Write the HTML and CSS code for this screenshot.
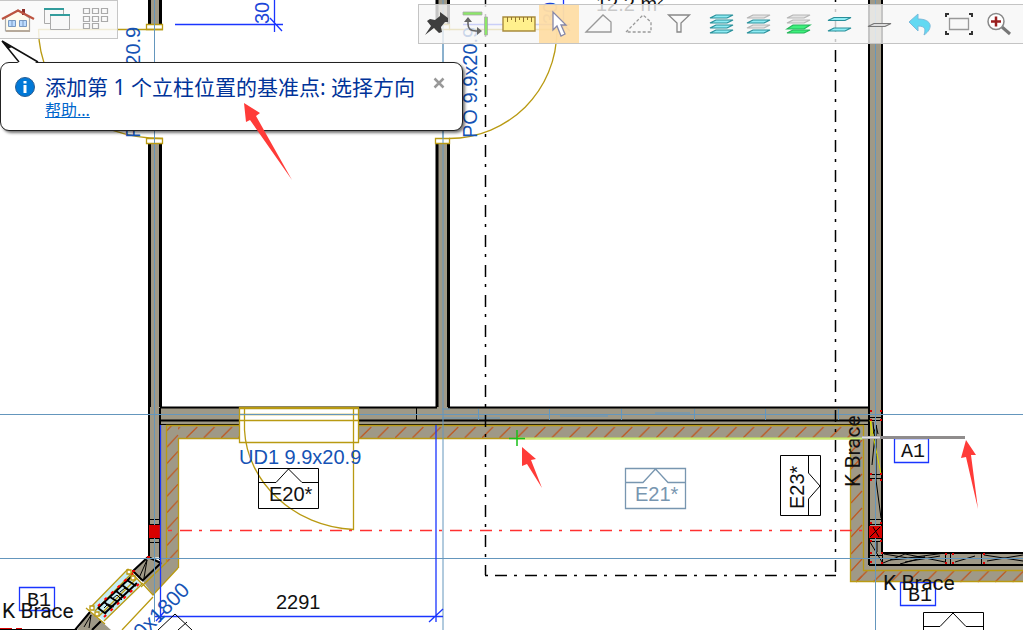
FILE: index.html
```html
<!DOCTYPE html>
<html lang="zh-CN">
<head>
<meta charset="utf-8">
<title>平面图</title>
<link rel="stylesheet" href="styles.css">
</head>
<body>
<main class="stage">
<svg class="plan" role="img" aria-label="平面图">
  <defs>
    <pattern id="hatch-h" patternUnits="userSpaceOnUse" x="395" y="425" width="17.4" height="14"><path class="hatch" d="M0 13L11 2"/></pattern>
    <pattern id="hatch-v" patternUnits="userSpaceOnUse" x="167" y="432" width="12" height="16.4"><path class="hatch" d="M0 15L11 3"/></pattern>
    <pattern id="hatch-r" patternUnits="userSpaceOnUse" x="851" y="437" width="12" height="17"><path class="hatch" d="M0 15L11 3"/></pattern>
    <pattern id="hatch-b" patternUnits="userSpaceOnUse" x="856" y="570" width="17.4" height="13"><path class="hatch" d="M0 12L11 1"/></pattern>
  </defs>

  <!-- walls -->
  <g class="fill-wall">
    <path d="M148 0H162V24H148zM148 143H162V557L148 558zM436 0H450V24H436zM436 143H450V408H436zM869 0H883V565H869z"/>
    <path d="M160 407H870V438H178V568L153 595L142 580L161 562z"/>
    <path d="M850 425H869V553H1023V582H850z"/>
    <path d="M148 557L161 563L142 580L133 571z"/>
    <path d="M90 612L101 621L111 630H77z"/>
  </g>
  <path fill="url(#hatch-h)" d="M178 425H866V439H178z"/>
  <path fill="url(#hatch-v)" d="M167 426H179V562H167z"/>
  <path fill="url(#hatch-r)" d="M851 439H863V580H851z"/>
  <path fill="url(#hatch-b)" d="M856 570H1023V583H856z"/>
  <g class="black thick3">
    <path d="M149.500 0V24M160.500 0V24M149.500 143V407M160.500 143V407M437 0V24M448.500 0V24M437 143V407M448.500 143V407"/>
  </g>
  <g class="black thick2">
    <path d="M149 400V557M160 408V425M160 407.500H437M448 407.500H870M160 420.500H870M869 0V565M882 0V553M882 553H1023M869 565H1023"/>
    <path d="M148 557L133 571M161 563L142 581M148 557L161 563M133 571L142 580M90 612L75 630M101 621L92 630M0 630H77"/>
  </g>
  <g class="black">
    <path d="M149 519.500H160M149 524.500H160M149 538.500H160M149 542.500H160M159.500 425V560M416.500 408V420M139 578L147 560L144 578M84 627L91 615L89 628"/>
    <path d="M870 417.500H882M870 420.500H882M870 474.500H882M870 478.500H882M870 519.500H882M870 524.500H882M870 538.500H882M870 541.500H882M870 555.500H882M872 465L876 425L878 434M873 434L876 427M876 425V480L881 518M873 422L876 455M870 542L882 562M877 542V552M882.500 553V565"/>
    <path d="M883 563L905 554L945 562M884 554L908 558L945 553M890 560L925 557L900 564M905 562L940 556M945.500 553V565M950.500 553V565M981.500 553V565M955 562L975 556M984 555L1023 561M987 561L1023 555M160 424.500H869"/>
  </g>
  <path class="yellow-bright" d="M870 420L881 474M871 420V436"/>

  <!-- insulation outline -->
  <path class="gold" d="M166.500 563V425.500H863.500V570.500H1023M178.500 568V438.500H850.500V581.500H1023M178 568L153 595L142 583M167 562L141 587M153 597L122 630"/>

  <!-- guides -->
  <path class="guide" d="M0 414.500H1023M0 558.500H1023M154.500 0V622M443 0V630M875.500 0V630"/>
  <path class="guide" d="M478.500 409V420M549.500 409V420M621.500 409V420M694.500 409V420M765.500 409V420M838.500 409V420M442 409H450M442 418H500M560 416H608M655 413H690"/>

  <!-- door openings -->
  <g class="gold on-white">
    <path d="M146.500 24.500H162.500V29.500H146.500zM146.500 138.500H162.500V143.500H146.500zM435.500 24.500H449.500V29.500H435.500zM435.500 138.500H449.500V143.500H435.500z"/>
    <path d="M239.500 407.500H358.500V442.500H239.500z"/>
  </g>
  <g class="gold">
    <path d="M38.500 29.500H163M38.500 29C39 92 90 138 163 138.500M449 29.500H557M557 29C557 92 508 138 449 138.500"/>
    <path d="M240 408.500H358M240 414.500H358M240 420.500H358M244.500 408V430C247 482 294 527 353.500 529.500V408"/>
  </g>
  <path class="guide" d="M154.500 24V143M443 24V143M240 414.500H358"/>

  <!-- corner window -->
  <g>
    <path class="glass" d="M128 570L142 585L104 621L90 608z"/>
    <path class="gold" d="M128 569L142 584M90 608L128 569M104 621L142 584M86 608L105 624M133 572L95 611M137 578L99 616"/>
    <path class="black thick2" d="M98 608L132 576M105 613L137 583"/>
    <path class="black thick2" d="M98 608L106 614M104 602L112 608M110 597L118 602M116 591L124 597M122 585L130 591M127 580L136 586"/>
    <path class="black" d="M104 608L108 604L114 607M112 599L117 595L122 600M120 592L125 588L130 592"/>
    <path class="red-dots" d="M98 606L134 572M104 617L142 581"/>
    <path class="on-white gold" d="M90 606h4v4h-4zM127 570h4v4h-4zM131 576h4v4h-4zM95 612h4v4h-4z"/>
  </g>

  <!-- posts -->
  <g class="red-fill">
    <path d="M149 525H160V538H149zM869 526H882V538H869z"/>
    <path d="M870 410h2v2h-2zM880 410h2v2h-2zM870 419h2v2h-2zM880 419h2v2h-2zM870 473h2v2h-2zM880 473h2v2h-2zM870 479h2v2h-2zM880 479h2v2h-2zM870 522h2v2h-2zM880 522h2v2h-2zM870 540h2v2h-2zM880 540h2v2h-2zM870 552h2v2h-2zM870 561h2v2h-2zM881 552h2v2h-2zM881 562h2v2h-2zM945 553h2v2h-2zM945 562h2v2h-2zM952 553h2v2h-2zM952 562h2v2h-2zM983 553h2v2h-2zM983 562h2v2h-2zM147 556h3v2h-3zM132 570h3v2h-3zM0 628h12v1h-12zM16 628h6v1h-6z"/>
  </g>
  <path class="black" d="M870 537L880 527M873 527L879 537"/>

  <!-- dash-dot lines -->
  <path class="black thick2 dash" d="M485.500 -5V575"/>
  <path class="black thick2 dash" d="M835.500 -10V575"/>
  <path class="black thick2 dash" d="M495 575.500H836M485 575.500h3"/>
  <path class="axis dash" d="M180 530.500H869M168 530.500h4"/>

  <!-- dimensions -->
  <path class="blue" d="M160.500 425V622M436 425V622M155 616.500H443M429 622L443 609M156 621L164 612M175 24.500H283M274.500 0V32M270 18L282 31M463 24.500H570M563.500 0V31M557 18L570 31"/>
  <path class="blue" d="M894.500 438.500H928.500V462.500H894.500zM900.500 582.500H935.500V605.500H900.500zM19.500 587.500H54.500V610.500H19.500z"/>

  <!-- elevation markers -->
  <path class="black" d="M258.500 468.500H318.500V508.500H258.500zM258 482.500H276L288.500 469L302 482.500H318M780.500 455.500H820.500V515.500H780.500zM808.500 456V473L820 486L808.500 499V515M923.500 640V612.500H983.500V640M923 626.500H940L953 613L966 626.500H983M158 630L175 614L192 630M187 622L178 630"/>
  <path class="marker-blue" d="M625.500 468.500H685.500V508.500H625.500zM625 482.500H643L655.500 469L668 482.500H685"/>

  <!-- labels -->
  <text class="label" x="269" y="501">E20*</text>
  <text class="label muted" x="635" y="501">E21*</text>
  <text class="label" transform="translate(804 509) rotate(-90)">E23*</text>
  <text class="label" x="276" y="609">2291</text>
  <text class="label door" x="239" y="464">UD1 9.9x20.9</text>
  <text class="label door" transform="translate(477 138) rotate(-90)">PO 9.9x20.9</text>
  <text class="label door" transform="translate(140 138) rotate(-90)">PO 9.9x20.9</text>
  <text class="label door slanted" transform="translate(142 640) rotate(-45)">0x1800</text>
  <text class="label dim" transform="translate(269 24) rotate(-90)">30</text>
  <text class="label dim" transform="translate(557 24) rotate(-90)">30</text>
  <text class="label" x="596" y="11">12.2 m²</text>
  <text class="label brace" x="2" y="618">K Brace</text>
  <text class="label brace" x="883" y="590">K Brace</text>
  <text class="label brace" transform="translate(860 487) rotate(-90)">K Brace</text>
  <text class="label grid-name" x="901" y="457">A1</text>
  <text class="label grid-name" x="908" y="601">B1</text>
  <text class="label grid-name" x="27" y="606">B1</text>

  <!-- direction picking -->
  <path class="pick" d="M517 438.500H862"/>
  <path class="ray" d="M862 437.500H965"/>
  <path class="ray-light" d="M862 437.500H880"/>
  <path class="cross" d="M509 438.500H525M517 430V446"/>
</svg>

<nav class="views" aria-label="视图">
  <button class="view" type="button" aria-label="主页"><svg width="36" height="28" viewBox="0 0 36 28"><path fill="#fffbed" stroke="#aaa" stroke-width="1.200" d="M5.500 13L18 5L29.500 13V26H5.500z"/><path fill="#b6a99b" d="M6 25h24v2H6z"/><path fill="#8d2f2a" d="M22 4h3v6h-3z"/><path fill="none" stroke="#bd5440" stroke-width="2.200" d="M2 14L18 5.500L34 14"/><path fill="#bcdcff" stroke="#7899c1" d="M8.500 15.500h7v6h-7zM19.500 15.500h7v6h-7zM12 15.500v6M23 15.500v6"/></svg></button>
  <button class="view" type="button" aria-label="窗口"><svg width="36" height="28" viewBox="0 0 36 28"><path fill="#f8f8f8" stroke="#aaa" d="M5.500 4.500h19v14h-19z"/><path stroke="#329c9c" stroke-width="2" d="M5 4h20"/><path fill="#f8f8f8" stroke="#aaa" d="M11.500 10.500h19v14h-19z"/><path stroke="#329c9c" stroke-width="2" d="M11 10h20"/></svg></button>
  <button class="view" type="button" aria-label="网格"><svg width="36" height="28" viewBox="0 0 36 28"><path fill="none" stroke="#aaa" stroke-width="1.200" d="M5.500 3.500h6v5h-6zM14.500 3.500h6v5h-6zM23.500 3.500h6v5h-6zM5.500 11.500h6v5h-6zM14.500 11.500h6v5h-6zM23.500 11.500h6v5h-6zM5.500 18.500h6v5h-6zM14.500 18.500h6v5h-6z"/></svg></button>
</nav>

<div class="tools" role="toolbar" aria-label="工具">
  <button class="tool" type="button" aria-label="固定"><svg class="icon" viewBox="0 0 40 38"><path fill="#3e3e3e" d="M21 7L29 13L29 17L26 17L22 22L23 27L20 28L15 23L6 30L12 21L8 16L11 14L16 15L21 11z"/></svg></button>
  <button class="tool" type="button" aria-label="旋转对齐"><svg class="icon" viewBox="0 0 40 38"><path fill="#8be868" stroke="#aaa" stroke-width=".8" d="M4 7h19v3H4zM25.500 12h3v18h-3z"/><path fill="none" stroke="#666" stroke-width="1.600" d="M9 15V19Q9 26 17 26H21"/><path fill="#666" d="M9 12L13 17H5zM23 26L18 22V30z"/></svg></button>
  <button class="tool" type="button" aria-label="测量"><svg class="icon" viewBox="0 0 40 38"><path fill="#fff08d" stroke="#a88a3c" stroke-width="1.400" d="M4 12h32v14H4z"/><path stroke="#927530" d="M8.500 12v5M12.500 12v3M16.500 12v5M20.500 12v3M24.500 12v5M28.500 12v3M32.500 12v5"/></svg></button>
  <button class="tool tool-active" type="button" aria-label="选择" aria-pressed="true"><svg class="icon" viewBox="0 0 40 38"><path fill="#fff" stroke="#8587a8" stroke-width="1.300" d="M14 7V25L18 21L22 31L26 29L22 20L27 20z"/></svg></button>
  <button class="tool" type="button" aria-label="多边形"><svg class="icon" viewBox="0 0 40 38"><path fill="none" stroke="#999" stroke-width="1.300" d="M7 27L24 10L32 17V27z"/></svg></button>
  <button class="tool" type="button" aria-label="虚线多边形"><svg class="icon" viewBox="0 0 40 38"><path fill="none" stroke="#999" stroke-width="1.300" stroke-dasharray="3 2" d="M7 27L24 10L32 17V27z"/></svg></button>
  <button class="tool" type="button" aria-label="筛选"><svg class="icon" viewBox="0 0 40 38"><path fill="#fafafa" stroke="#888" stroke-width="1.300" d="M9.500 10H30.500L22 18V27H18V18z"/></svg></button>
  <button class="tool" type="button" aria-label="全部图层"><svg class="icon" viewBox="0 0 40 38"><g class="plate"><path d="M11 28L17 25H34L28 28z"/><path d="M11 23L17 20H34L28 23z"/><path d="M11 18L17 15H34L28 18z"/><path d="M11 13L17 10H34L28 13z"/></g></svg></button>
  <button class="tool" type="button" aria-label="部分图层"><svg class="icon" viewBox="0 0 40 38"><g class="plate"><path d="M8 28L14 25H31L25 28z"/><path class="plate-grey" d="M8 23L14 20H31L25 23z"/><path d="M8 18L14 15H31L25 18z"/><path class="plate-grey" d="M8 13L14 10H31L25 13z"/></g></svg></button>
  <button class="tool" type="button" aria-label="当前图层"><svg class="icon" viewBox="0 0 40 38"><g class="plate"><path class="plate-green" d="M8 28L14 25H31L25 28z"/><path class="plate-green" d="M8 24L14 20H31L25 24z"/><path class="plate-grey" d="M8 18L14 15H31L25 18z"/><path class="plate-grey" d="M8 13L14 10H31L25 13z"/></g></svg></button>
  <button class="tool" type="button" aria-label="两层"><svg class="icon" viewBox="0 0 40 38"><g class="plate"><path d="M9 26L15 23H32L26 26z"/><path d="M9 15.500L15 12.500H32L26 15.500z"/></g></svg></button>
  <button class="tool" type="button" aria-label="单层"><svg class="icon" viewBox="0 0 40 38"><path fill="#ddd" stroke="#777" stroke-width="1.200" d="M9 21.500L15 18.500H32L26 21.500z"/></svg></button>
  <button class="tool" type="button" aria-label="撤销"><svg class="icon" viewBox="0 0 40 38"><path fill="#62d9f2" stroke="#7abadb" d="M10 17L19 9V14C34 14 34 24 25 30C27 24 26 21 19 21V26z"/></svg></button>
  <button class="tool" type="button" aria-label="适合窗口"><svg class="icon" viewBox="0 0 40 38"><path fill="none" stroke="#999" stroke-width="1.300" d="M10.500 13.500h19v11h-19z"/><path fill="none" stroke="#333" stroke-width="2" d="M7 12V9H10M30 9H33V12M33 26V29H30M10 29H7V26"/></svg></button>
  <button class="tool" type="button" aria-label="放大"><svg class="icon" viewBox="0 0 40 38"><path stroke="#777" stroke-width="3" d="M23 22L31 29"/><circle cx="17" cy="16.500" r="8" fill="#fff" stroke="#888" stroke-width="1.500"/><path stroke="#9a2020" stroke-width="2.500" d="M12 16.500h10M17 11.500v10"/></svg></button>
</div>

<section class="balloon" role="status">
  <svg class="balloon-tail" width="42" height="24" viewBox="0 0 42 24" aria-hidden="true"><path fill="#fff" d="M2 1L19 24H38z"/><path fill="none" stroke="#111" stroke-width="1.500" d="M19 22L2 1L38 22"/><path fill="#111" d="M2 1L12 7L8 9z"/></svg>
  <svg class="info" width="20" height="20" viewBox="0 0 20 20" aria-hidden="true"><circle cx="10" cy="10" r="9.500" fill="#0078d7" stroke="#2a5d91"/><path fill="#fff" d="M8.500 4h3v2.500h-3zM8.500 8h3v8h-3z"/></svg>
  <div class="message">
    <p class="prompt">添加第 1 个立柱位置的基准点: 选择方向</p>
    <a class="help" href="#help">帮助...</a>
  </div>
  <button class="close" type="button" aria-label="关闭"><svg width="12" height="12" viewBox="0 0 12 12"><path stroke="#999" stroke-width="2.500" d="M1.500 1.500L10.500 10.500M10.500 1.500L1.500 10.500"/></svg></button>
</section>

<svg class="plan arrows" aria-hidden="true">
  <path d="M244 103L260 113L256 116L292 180L250 120L246 122z"/>
  <path d="M522 447L536 459L531 460L542 488L527 464L522 466z"/>
  <path d="M966 440L976 455L971 455L978 509L966 457L961 458z"/>
</svg>
</main>
</body>
</html>
```
FILE: styles.css
```css
* { box-sizing: border-box; }

body {
  margin: 0;
  background: #fff;
  font-family: "Noto Sans", "Noto Sans CJK SC", sans-serif;
}

.stage {
  position: relative;
  min-height: 100vh;
  overflow: hidden;
}

.plan {
  position: absolute;
  inset: 0;
  width: 100%;
  height: 100%;
}

.arrows { pointer-events: none; fill: #ff3b38; }

.fill-wall { fill: #9f9987; }
.hatch { fill: none; stroke: #bd5a24; stroke-width: 1.3; }
.black { fill: none; stroke: #000; stroke-width: 1; }
.thick2 { stroke-width: 2; }
.thick3 { stroke-width: 3; }
.dash { stroke-width: 1.5; stroke-dasharray: 12 7 3 8; }
.axis { fill: none; stroke: #ff3030; }
.gold { fill: none; stroke: #b99a12; stroke-width: 1.3; }
.on-white { fill: #fff; }
.yellow-bright { fill: none; stroke: #d8d800; }
.guide { fill: none; stroke: #6496bd; stroke-width: 1; }
.glass { fill: #c5edf5; }
.red-dots { fill: none; stroke: #f00; stroke-width: 2; stroke-dasharray: 3 6; }
.red-fill { fill: #d80000; }
.blue { fill: none; stroke: #1a35ff; stroke-width: 1.3; }
.marker-blue { fill: none; stroke: #7896b0; stroke-width: 1.3; }
.pick { stroke: #c9ef70; stroke-width: 2; }
.ray { stroke: #8f8c8c; stroke-width: 3; }
.ray-light { stroke: #e0e0e6; stroke-width: 2; }
.cross { stroke: #18c018; stroke-width: 1.5; }

.label {
  font-family: "Liberation Sans", sans-serif;
  font-size: 20px;
  fill: #111;
}
.door { fill: #1553b5; }
.slanted { font-size: 21px; }
.dim { fill: #1a45d8; }
.muted { fill: #7896b0; }
.brace { font-family: Roboto, sans-serif; font-size: 21px; }
.grid-name { font-family: "Liberation Mono", monospace; }

button {
  padding: 0;
  border: 0;
  background: none;
}

.views {
  position: absolute;
  top: 0;
  left: 0;
  display: flex;
  gap: 3px;
  padding: 4px 3px 5px 0;
  border: 1px solid #c6c6c6;
  border-left: 0;
  background: rgba(249, 249, 249, 0.85);
}
.view { display: flex; }

.tools {
  position: absolute;
  top: 4px;
  right: 0;
  display: flex;
  padding-right: 4px;
  border: 1px solid #c4c4c4;
  border-right: 0;
  background: rgba(246, 246, 246, 0.8);
}
.tool { display: flex; }
.tool-active { background: rgba(255, 216, 150, 0.8); }
.icon { width: 40px; height: 38px; }

.plate { fill: #8fecf4; stroke: #298f9a; stroke-width: 1.2; }
.plate-grey { fill: #e4e4e4; stroke: #b5b5b5; }
.plate-green { fill: #3ef07c; stroke: #25b65a; }

.balloon {
  position: absolute;
  top: 62px;
  left: 0;
  display: flex;
  align-items: flex-start;
  padding: 11px 17px 10px 14px;
  border: 1px solid #222;
  border-radius: 9px;
  background: #fff;
  box-shadow: 2px 2px 3px rgba(0, 0, 0, 0.55);
}
.balloon-tail { position: absolute; top: -23px; left: -1px; }
.info { margin: 3px 10px 0 0; }
.message { display: flex; flex-direction: column; align-items: flex-start; }
.prompt {
  margin: 0;
  font-size: 21px;
  line-height: 26px;
  color: #003399;
  white-space: nowrap;
}
.help { font-size: 16px; line-height: 20px; color: #0066cc; }
.close { display: flex; margin: 3px 0 0 18px; }
```
